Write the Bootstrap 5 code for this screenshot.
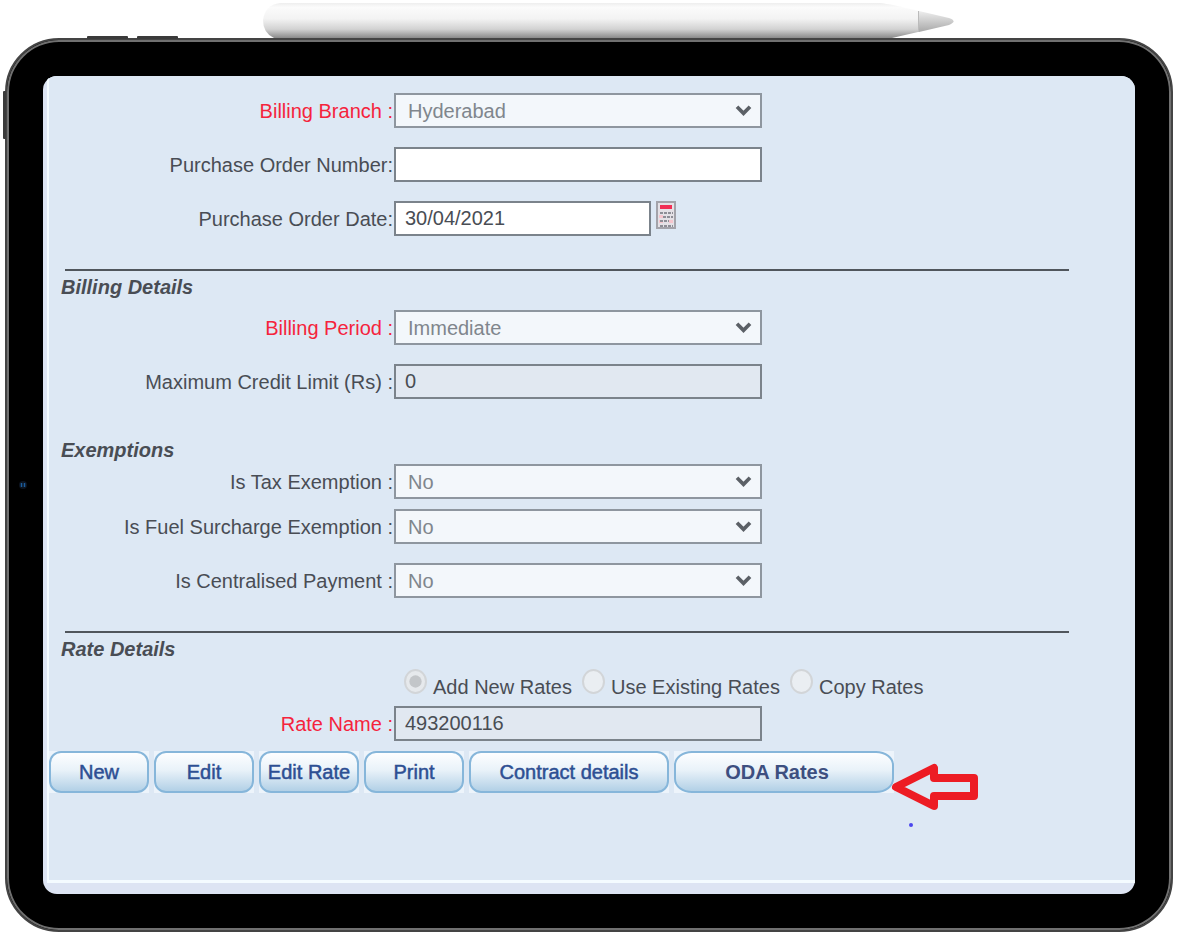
<!DOCTYPE html>
<html lang="en">
<head>
<meta charset="utf-8">
<meta name="viewport" content="width=device-width, initial-scale=1">
<title>Contract – Billing and Rate Details</title>
<link href="https://cdn.jsdelivr.net/npm/bootstrap@5.3.0/dist/css/bootstrap.min.css" rel="stylesheet">
<style>
  body { background: #fff; color: #494d54; font-family: "Liberation Sans", Arial, sans-serif; font-size: 20px; line-height: 28px; }
  .stage { padding: 38px 4px 4px 5px; }
  .tablet { background: #000; border: 2px solid #444; border-radius: 54px; padding: 36px; box-shadow: inset 0 0 0 2px #707070; }
  .pen { top: 2px; left: 263px; z-index: 2; }
  .key { background: #3a3a3a; position: absolute; border-radius: 1px; }
  .key-a { top: 36px; left: 87px; width: 41px; height: 3px; }
  .key-b { top: 36px; left: 137px; width: 41px; height: 3px; }
  .key-c { top: 91px; left: 3px; width: 3px; height: 48px; }
  .lens { left: 18px; top: 480px; }
  .screen { background: #dde4f3; border-radius: 14px; padding: 0 0 11px 4px; overflow: hidden; }
  .panel { background: #dde8f4; border: solid #f4fbff; border-width: 0 0 3px 2px; padding-top: 17px; min-height: 807px; }
  .line { display: flex; align-items: center; min-height: 35px; margin-bottom: 19px; }
  .line.tight { margin-bottom: 10px; }
  .line > .cap { flex: 0 0 345px; padding-right: 1px; text-align: right; white-space: nowrap; }
  .req { color: #f5233c; }
  .box { flex: 0 1 368px; min-width: 0; height: 35px; border: 2px solid #7b838b; border-radius: 0; padding: 0 9px; background-color: #fff; color: #494d54; font-size: 20px; line-height: 28px; }
  .box.date { flex-basis: 257px; }
  .box:disabled, .box[readonly] { background-color: #e1e8f1; color: #494d54; opacity: 1; }
  select.box, select.box:disabled { border-color: #8e969f; padding: 0 12px; background-color: #f3f7fb; color: #80868d; background-image: url("data:image/svg+xml,%3csvg xmlns='http://www.w3.org/2000/svg' viewBox='0 0 18 14'%3e%3cpath fill='none' stroke='%235b6066' stroke-width='4' d='M2 3l7 7 7-7'/%3e%3c/svg%3e"); background-size: 17px 13px; background-position: right 8px center; }
  .calendar { margin: 0 0 7px 5px; line-height: 0; }
  .rule { height: 2px; margin: 33px 66px 2px 16px; background: #50565c; opacity: 1; border: 0; }
  .title { margin: 0 0 9px 12px; font-size: 20px; line-height: 28px; font-weight: 700; font-style: italic; }
  .title.spaced { margin-top: 37px; }
  .rates { min-height: 43px; padding-left: 355px; }
  .rates input { width: 23px; height: 25px; margin: 0 6px 7px 0; background-color: #eaeef2; border: 2px solid #d2d5d8; }
  .rates input:disabled { opacity: 1; }
  .rates input:checked { background-color: #e6e9ec; border-color: #d2d5d8; background-image: url("data:image/svg+xml,%3csvg xmlns='http://www.w3.org/2000/svg' viewBox='-4 -4 8 8'%3e%3ccircle r='2.6' fill='%23c3c6c9'/%3e%3c/svg%3e"); }
  .rates input:disabled ~ label { opacity: 1; }
  .rates .opt { margin-right: 10px; white-space: nowrap; }
  .actions { gap: 5px; }
  .act { display: block; width: 100px; height: 42px; padding: 0; border: 2px solid #86b6da; border-radius: 12px; background: linear-gradient(#fdfeff, #e9f2f9 45%, #b2d0e6); color: #2d4f93; font-size: 20px; line-height: 28px; white-space: nowrap; -webkit-text-stroke: 0.5px #2d4f93; }
  .act.wide { width: 200px; }
  .act.oda { width: 220px; border-radius: 18px / 14px; color: #3d4f80; font-weight: 700; padding-right: 14px; -webkit-text-stroke: 0; }
  .corner { background: #edf4fb; }
  .pointer { left: 214px; top: 10px; }
</style>
</head>
<body>
<div class="stage position-relative">
  <span class="key key-a"></span><span class="key key-b"></span><span class="key key-c"></span>
  <svg class="pen position-absolute" width="692" height="37" viewBox="0 0 692 37" aria-hidden="true">
    <defs>
      <linearGradient id="barrel" x2="0" y2="1"><stop offset="0" stop-color="#eee"/><stop offset=".12" stop-color="#fbfbfb"/><stop offset=".45" stop-color="#f3f3f3"/><stop offset=".75" stop-color="#d2d2d2"/><stop offset="1" stop-color="#8a8a8a"/></linearGradient>
      <linearGradient id="nib" x2="0" y2="1"><stop offset="0" stop-color="#eee"/><stop offset="1" stop-color="#a8a8a8"/></linearGradient>
    </defs>
    <path fill="url(#barrel)" d="M17 1H617Q628 2 655 9V30L629 36H11Q0 31 0 18Q2 3 17 1Z"/>
    <path fill="url(#nib)" d="M656 9L686 16Q695 19 686 23L656 30Z"/>
    <path stroke="#bbb" d="M655.500 9V30"/>
  </svg>
  <svg class="lens position-absolute" width="10" height="10" viewBox="0 0 10 10" aria-hidden="true"><circle cx="5" cy="5" r="4" fill="#0c1420"/><path stroke="#1b5c9c" stroke-width="1.500" d="M3.500 3v4M6.500 3v4"/></svg>

  <main class="tablet">
    <div class="screen">
      <form class="panel">
        <div class="line"><label class="cap req" for="branch">Billing Branch :</label><select class="form-select box" id="branch" disabled><option>Hyderabad</option></select></div>
        <div class="line"><label class="cap" for="po">Purchase Order Number:</label><input class="form-control box" id="po" type="text"></div>
        <div class="line mb-0"><label class="cap" for="podate">Purchase Order Date:</label><input class="form-control box date" id="podate" type="text" value="30/04/2021">
          <button class="btn calendar p-0 border-0 rounded-0" type="button" aria-label="Choose date">
            <svg width="20" height="28" viewBox="0 0 20 28"><path fill="#e4e1e6" stroke="#a3a3aa" stroke-width="2" d="M1 1h18v26H1z"/><path fill="#f12e55" d="M4 4h12v4H4z"/><path fill="#f6c5cd" d="M3 14h4v3H3zM3 19h4v3H3zM13 19h4v3h-4z"/><path stroke="#8e8e96" stroke-width="2" stroke-dasharray="3 1" d="M4 12h13M7 16h10M4 20h9M4 25h13"/></svg>
          </button>
        </div>
        <hr class="rule">
        <h2 class="title">Billing Details</h2>
        <div class="line"><label class="cap req" for="period">Billing Period :</label><select class="form-select box" id="period" disabled><option>Immediate</option></select></div>
        <div class="line mb-0"><label class="cap" for="limit">Maximum Credit Limit (Rs) :</label><input class="form-control box" id="limit" type="text" value="0" readonly></div>
        <h2 class="title spaced mb-0">Exemptions</h2>
        <div class="line tight"><label class="cap" for="tax">Is Tax Exemption :</label><select class="form-select box" id="tax" disabled><option>No</option></select></div>
        <div class="line"><label class="cap" for="fuel">Is Fuel Surcharge Exemption :</label><select class="form-select box" id="fuel" disabled><option>No</option></select></div>
        <div class="line mb-0"><label class="cap" for="central">Is Centralised Payment :</label><select class="form-select box" id="central" disabled><option>No</option></select></div>
        <hr class="rule">
        <h2 class="title mb-0">Rate Details</h2>
        <div class="rates d-flex align-items-center">
          <div class="opt d-flex align-items-center"><input class="form-check-input" type="radio" name="rates" id="r1" checked disabled><label class="pt-1" for="r1">Add New Rates</label></div>
          <div class="opt d-flex align-items-center"><input class="form-check-input" type="radio" name="rates" id="r2" disabled><label class="pt-1" for="r2">Use Existing Rates</label></div>
          <div class="opt d-flex align-items-center"><input class="form-check-input" type="radio" name="rates" id="r3" disabled><label class="pt-1" for="r3">Copy Rates</label></div>
        </div>
        <div class="line tight"><label class="cap req" for="rate">Rate Name :</label><input class="form-control box" id="rate" type="text" value="493200116" readonly></div>
        <div class="actions d-flex flex-wrap">
          <div class="corner"><button class="act" type="button">New</button></div>
          <div class="corner"><button class="act" type="button">Edit</button></div>
          <div class="corner"><button class="act" type="button">Edit Rate</button></div>
          <div class="corner"><button class="act" type="button">Print</button></div>
          <div class="corner"><button class="act wide" type="button">Contract details</button></div>
          <div class="corner position-relative"><button class="act oda" type="button">ODA Rates</button>
            <svg class="pointer position-absolute" width="92" height="72" viewBox="0 0 92 72" aria-hidden="true"><path fill="none" stroke="#ed1c24" stroke-width="8" stroke-linejoin="round" d="M8 26L46 7V17H86V35H46V45Z"/><circle cx="23" cy="64" r="2" fill="#4b46ee"/></svg>
          </div>
        </div>
      </form>
    </div>
  </main>
</div>
<script src="https://cdn.jsdelivr.net/npm/bootstrap@5.3.0/dist/js/bootstrap.bundle.min.js"></script>
</body>
</html>
